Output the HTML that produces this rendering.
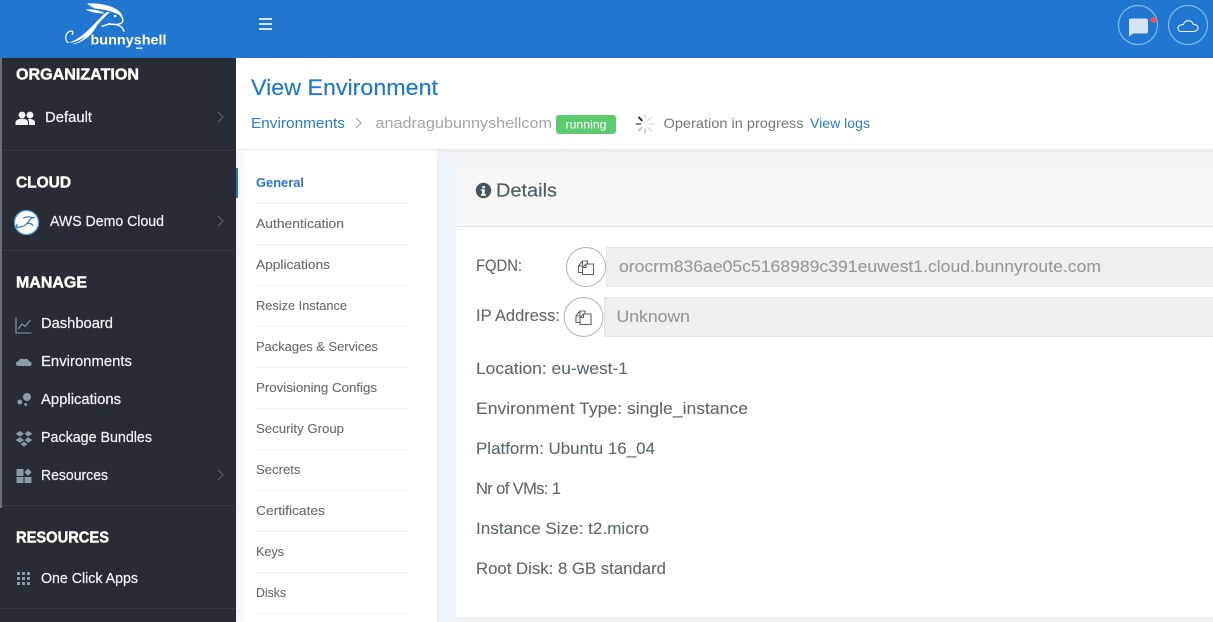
<!DOCTYPE html>
<html><head><meta charset="utf-8"><title>View Environment</title>
<style>
html,body{margin:0;padding:0;width:1213px;height:622px;overflow:hidden;background:#fff}
svg{display:block}
text{font-family:"Liberation Sans",sans-serif}
.h{font-size:16px;font-weight:bold;fill:#fff;stroke:#fff;stroke-width:.45px}
.m{font-size:15px;fill:#f2f3f4;stroke:#f2f3f4;stroke-width:.22px}
.n{font-size:13px;fill:#646c74;stroke:#646c74;stroke-width:.12px}
.d{font-size:16.500px;fill:#5c6870;stroke:#5c6870;stroke-width:.1px}
</style></head><body>
<svg width="1213" height="622" viewBox="0 0 1213 622" xmlns="http://www.w3.org/2000/svg">
<defs>
<linearGradient id="ns" x1="0" x2="1" y1="0" y2="0"><stop offset="0" stop-color="#f1f2f3"/><stop offset="1" stop-color="#fff"/></linearGradient>
<linearGradient id="hs" x1="0" x2="0" y1="0" y2="1"><stop offset="0" stop-color="#e6eaed"/><stop offset="1" stop-color="#eff4f8"/></linearGradient>
</defs>
<!-- backgrounds -->
<rect width="1213" height="622" fill="#edf3f7"/>
<rect x="236" y="58" width="977" height="92" fill="#fff"/>
<rect x="236" y="149" width="977" height="1" fill="#e9eced"/>
<rect x="437" y="150" width="776" height="3" fill="url(#hs)"/>
<rect x="236" y="150" width="201" height="472" fill="#fff"/>
<rect x="236" y="150" width="12" height="472" fill="url(#ns)"/>
<!-- header -->
<rect width="1213" height="58" fill="#2176d2"/>
<!-- logo -->
<g fill="#fff">
<path d="M87 3.500C97 3 108 4.500 115 8.500C119 10.500 121.500 13 122.500 16.500C116 12.500 106 9.500 95 8.500C92 7 89 5.500 87 3.500Z"/>
<path d="M85.500 9.500C92 9 100 10 105 13.500C98 13.500 91 12.500 85.500 9.500Z"/>
<path d="M110 12C103 18 97 26 90.500 32C83 38.500 75 43.500 68 42.500C72 42 78 39 85 33C93 26 100 17 107 12Z"/>
<path d="M97 25.500C94 31 91 35 86 38.500C81 42 76 44.500 72 44C78 43 82 40 85 36.500C90 32 93 28 97 25.500Z"/>
</g>
<g fill="none" stroke="#fff" stroke-linecap="round">
<path d="M113 11.500C120 13 124 18 122.500 22C120.500 25 113 25 108.500 23.500" stroke-width="1.400"/>
<path d="M102 26.500C110 22.500 122 23.500 124 31.500" stroke-width="1.300"/>
<path d="M68 42.500C64.500 40 65 32 71 31C73 31 73.500 33.500 72 34.500" stroke-width="1.200"/>
</g>
<circle cx="115" cy="16" r="1.300" fill="#fff"/>
<text x="90.500" y="44.500" font-size="14" font-weight="bold" fill="#fff" textLength="76" lengthAdjust="spacingAndGlyphs">bunnyshell</text>
<rect x="136" y="47.500" width="6.500" height="1.300" fill="#fff"/>
<g fill="#d4e4f6"><rect x="259" y="18" width="13" height="2"/><rect x="259" y="23" width="13" height="2"/><rect x="259" y="28" width="13" height="2"/></g>
<circle cx="1138" cy="25" r="19.500" fill="none" stroke="#7dbaf0" stroke-width="1.200"/>
<circle cx="1188" cy="25" r="19.500" fill="none" stroke="#7dbaf0" stroke-width="1.200"/>
<path d="M1130.500 18.500h15.500a2 2 0 0 1 2 2v11a2 2 0 0 1-2 2h-13l-4 3v-16a2 2 0 0 1 1.500-2z" fill="#d5e4f5"/>
<circle cx="1153.500" cy="20" r="3" fill="#f0544f"/>
<path d="M1181 31.500h12.500c2.500 0 4.500-1.500 4.500-3.600s-2-3.600-4.500-3.400c-1-2.500-3-4-5.500-3.800-2.300.2-4 1.700-4.500 3.900-3-.2-5.500 1.200-5.500 3.400s1.500 3.500 3 3.500z" fill="none" stroke="#e8f1fb" stroke-width="1.100"/>
<!-- sidebar -->
<rect y="58" width="236" height="564" fill="#282c34"/>
<g fill="#343840"><rect y="150" width="236" height="1"/><rect y="250" width="236" height="1"/><rect y="505" width="236" height="1"/><rect y="608" width="236" height="1"/></g>
<rect y="58" width="2" height="450" fill="#6c7075"/>
<text class="h" x="16" y="79.500" textLength="123" lengthAdjust="spacingAndGlyphs">ORGANIZATION</text>
<text class="h" x="16" y="187.500" textLength="55" lengthAdjust="spacingAndGlyphs">CLOUD</text>
<text class="h" x="16" y="287.500" textLength="71" lengthAdjust="spacingAndGlyphs">MANAGE</text>
<text class="h" x="16" y="542.500" textLength="93" lengthAdjust="spacingAndGlyphs">RESOURCES</text>
<text class="m" x="45" y="122" textLength="47" lengthAdjust="spacingAndGlyphs">Default</text>
<text class="m" x="50" y="226" textLength="114" lengthAdjust="spacingAndGlyphs">AWS Demo Cloud</text>
<text class="m" x="41" y="328" textLength="72" lengthAdjust="spacingAndGlyphs">Dashboard</text>
<text class="m" x="41" y="366" textLength="91" lengthAdjust="spacingAndGlyphs">Environments</text>
<text class="m" x="41" y="404" textLength="80" lengthAdjust="spacingAndGlyphs">Applications</text>
<text class="m" x="41" y="442" textLength="111" lengthAdjust="spacingAndGlyphs">Package Bundles</text>
<text class="m" x="41" y="480" textLength="67" lengthAdjust="spacingAndGlyphs">Resources</text>
<text class="m" x="41" y="583" textLength="97" lengthAdjust="spacingAndGlyphs">One Click Apps</text>
<!-- sidebar chevrons -->
<g fill="none" stroke="#566470" stroke-width="1.100"><path d="M218 112l5 5-5 5"/><path d="M218 216l5 5-5 5"/><path d="M218 470l5 5-5 5"/></g>
<!-- sidebar icons -->
<g fill="#f2f3f4"><circle cx="22" cy="115" r="3.400"/><circle cx="30" cy="115" r="3.400"/><path d="M15.500 125v-2.500c0-2.500 3-3.800 6.500-3.800s6 1.300 6 3.800v2.500z"/><path d="M29 125v-2.500c0-1.300-.4-2.500-1.200-3.500 3-.5 7.200.7 7.200 3.500v2.500z"/></g>
<circle cx="26.500" cy="222.500" r="12" fill="#fff" stroke="#5aa0da" stroke-width="1.300"/>
<path d="M18 227c5 1 9-3 11-6 2-3 4-4 6-3M23 218c3-1.500 7-1.500 9-.5M18 228c-2-.5-2-3-.5-3.500M26 224c3-1.500 6-.5 7 2" fill="none" stroke="#2f7cc8" stroke-width="1.200"/>
<path d="M16 317.500v15.500h15.500" fill="none" stroke="#8b9ca6" stroke-width="1.100"/>
<path d="M18 329l4-5 3 2.500 5.500-6.500" fill="none" stroke="#8b9ca6" stroke-width="1.100"/>
<path d="M18.500 366c-3.500 0-3.500-4.500-.2-4.700.8-2.500 3.500-3.600 5.700-1.900 1.800-1.100 4.500-.3 5 1.900 3.200-.1 3.700 4.700.6 4.700z" fill="#8b9ca6"/>
<g fill="#8b9ca6"><circle cx="27" cy="397" r="4"/><circle cx="19.800" cy="402" r="2.400"/><circle cx="25.700" cy="404.500" r="1.500"/></g>
<g fill="#8b9ca6"><path d="M20 431l-4.500 2.800 4.500 2.800 4-2.800z"/><path d="M28 431l-3.400 2.800 3.400 2.800 4.500-2.800z"/><path d="M20 437.200l-4.500 2.800 4.500 2.700 4-2.700z"/><path d="M28 437.200l-3.400 2.800 3.400 2.700 4.500-2.700z"/><path d="M20.500 444l3.500-2.500 3.500 2.500-3.500 2.700z"/></g>
<g fill="#8b9ca6"><rect x="16.500" y="469" width="7" height="7"/><rect x="16.500" y="477" width="7" height="6"/><rect x="24.500" y="477" width="7" height="6"/><path d="M28 468.500l3.700 3.700-3.700 3.500-3.600-3.500z"/></g>
<g fill="#8b9ca6">
<rect x="17" y="572" width="3" height="3"/><rect x="22" y="572" width="3" height="3"/><rect x="27" y="572" width="3" height="3"/>
<rect x="17" y="577" width="3" height="3"/><rect x="22" y="577" width="3" height="3"/><rect x="27" y="577" width="3" height="3"/>
<rect x="17" y="582" width="3" height="3"/><rect x="22" y="582" width="3" height="3"/><rect x="27" y="582" width="3" height="3"/>
</g>
<!-- page head -->
<text x="251" y="95" font-size="22.500" fill="#2176d2" stroke="#2176d2" stroke-width=".15" textLength="187" lengthAdjust="spacingAndGlyphs">View Environment</text>
<text x="251" y="128" font-size="14.500" fill="#2b7bd1" textLength="94" lengthAdjust="spacingAndGlyphs">Environments</text>
<path d="M356 118l5 5-5 5" fill="none" stroke="#9fa8ae" stroke-width="1.100"/>
<text x="375.500" y="128" font-size="14.500" fill="#9aa8b2" textLength="176.500" lengthAdjust="spacingAndGlyphs">anadragubunnyshellcom</text>
<rect x="556" y="115" width="60" height="19" rx="3" fill="#5ccb70"/>
<text x="565.500" y="128.500" font-size="12" fill="#fff" textLength="41" lengthAdjust="spacingAndGlyphs">running</text>
<g stroke-width="2" stroke-linecap="round">
<path d="M645 115v4" stroke="#e4e4e4"/><path d="M651 117.500l-2.800 2.800" stroke="#e4e4e4"/><path d="M654 124h-4" stroke="#e4e4e4"/><path d="M651 130.500l-2.800-2.800" stroke="#dedede"/><path d="M645 133v-4" stroke="#d6d6d6"/><path d="M639 130.500l2.800-2.800" stroke="#c8c8c8"/><path d="M636.500 124h4" stroke="#888"/><path d="M639 117.500l2.800 2.800" stroke="#333"/>
</g>
<text x="663.500" y="128" font-size="14" fill="#6f7a82" textLength="140" lengthAdjust="spacingAndGlyphs">Operation in progress</text>
<text x="810" y="128" font-size="14" fill="#2b7bd1" textLength="60" lengthAdjust="spacingAndGlyphs">View logs</text>
<!-- inner nav -->
<rect x="236" y="168" width="2" height="30" fill="#2176d2"/>
<text x="256" y="187" font-size="13" font-weight="bold" fill="#2f72d0" textLength="48" lengthAdjust="spacingAndGlyphs">General</text>
<text class="n" x="256" y="228" textLength="88" lengthAdjust="spacingAndGlyphs">Authentication</text>
<text class="n" x="256" y="269" textLength="74" lengthAdjust="spacingAndGlyphs">Applications</text>
<text class="n" x="256" y="310" textLength="91" lengthAdjust="spacingAndGlyphs">Resize Instance</text>
<text class="n" x="256" y="351" textLength="122" lengthAdjust="spacingAndGlyphs">Packages &amp; Services</text>
<text class="n" x="256" y="392" textLength="121" lengthAdjust="spacingAndGlyphs">Provisioning Configs</text>
<text class="n" x="256" y="433" textLength="88" lengthAdjust="spacingAndGlyphs">Security Group</text>
<text class="n" x="256" y="474" textLength="44.500" lengthAdjust="spacingAndGlyphs">Secrets</text>
<text class="n" x="256" y="515" textLength="69" lengthAdjust="spacingAndGlyphs">Certificates</text>
<text class="n" x="256" y="556" textLength="28" lengthAdjust="spacingAndGlyphs">Keys</text>
<text class="n" x="256" y="597" textLength="30" lengthAdjust="spacingAndGlyphs">Disks</text>
<g fill="#eff0f1"><rect x="256" y="203" width="152" height="1"/><rect x="256" y="244" width="152" height="1"/><rect x="256" y="285" width="152" height="1"/><rect x="256" y="326" width="152" height="1"/><rect x="256" y="367" width="152" height="1"/><rect x="256" y="408" width="152" height="1"/><rect x="256" y="449" width="152" height="1"/><rect x="256" y="490" width="152" height="1"/><rect x="256" y="531" width="152" height="1"/><rect x="256" y="572" width="152" height="1"/><rect x="256" y="613" width="152" height="1"/></g>
<!-- card -->
<rect x="456" y="168" width="770" height="449" rx="4" fill="#fff"/>
<path d="M456 226v-54a4 4 0 0 1 4-4h753v58z" fill="#f7f7f7"/>
<rect x="456" y="226" width="757" height="1" fill="#dfdfdf"/>
<circle cx="483.500" cy="190.500" r="7.700" fill="#46555f"/>
<rect x="482.300" y="186" width="2.500" height="2.300" fill="#f7f7f7"/>
<path d="M480.800 189.300h4v5h1.200v1.500h-5.200v-1.500h1.300v-3.500h-1.300z" fill="#f7f7f7"/>
<text x="496" y="196.500" font-size="18" fill="#4e5c64" stroke="#4e5c64" stroke-width=".15" textLength="61" lengthAdjust="spacingAndGlyphs">Details</text>
<text class="d" x="476" y="271" textLength="46" lengthAdjust="spacingAndGlyphs">FQDN:</text>
<text class="d" x="476" y="321" textLength="84" lengthAdjust="spacingAndGlyphs">IP Address:</text>
<!-- inputs -->
<rect x="606.500" y="247.500" width="620" height="39" fill="#edf0f3" stroke="#e2e4e6"/>
<rect x="604.500" y="297.500" width="620" height="39" fill="#edf0f3" stroke="#e2e4e6"/>
<text x="619" y="272" font-size="16.500" fill="#93999d" stroke="#93999d" stroke-width=".1" textLength="482" lengthAdjust="spacingAndGlyphs">orocrm836ae05c5168989c391euwest1.cloud.bunnyroute.com</text>
<text x="616.500" y="322" font-size="16.500" fill="#93999d" stroke="#93999d" stroke-width=".1" textLength="73.500" lengthAdjust="spacingAndGlyphs">Unknown</text>
<!-- copy buttons -->
<g fill="#fff" stroke="#b0b4b6" stroke-width="1"><circle cx="586" cy="267" r="19.500"/><circle cx="583.500" cy="317" r="19.500"/></g>
<g fill="none" stroke="#58646c" stroke-width="1.100">
<path d="M582 272.500h-3.500v-6.500l4-5h5v3"/><path d="M582.500 261v5h-4"/>
<path d="M582.500 274.500v-7l3.500-3.500h7.500v10.500z"/><path d="M586 264v3.500h-3.500"/>
</g>
<g fill="none" stroke="#58646c" stroke-width="1.100" transform="translate(-2.500 50)">
<path d="M582 272.500h-3.500v-6.500l4-5h5v3"/><path d="M582.500 261v5h-4"/>
<path d="M582.500 274.500v-7l3.500-3.500h7.500v10.500z"/><path d="M586 264v3.500h-3.500"/>
</g>
<!-- details -->
<text class="d" x="476" y="374" textLength="152" lengthAdjust="spacingAndGlyphs">Location: eu-west-1</text>
<text class="d" x="476" y="414" textLength="272" lengthAdjust="spacingAndGlyphs">Environment Type: single_instance</text>
<text class="d" x="476" y="454" textLength="179" lengthAdjust="spacingAndGlyphs">Platform: Ubuntu 16_04</text>
<text class="d" x="476" y="494" textLength="85">Nr of VMs: 1</text>
<text class="d" x="476" y="534" textLength="173" lengthAdjust="spacingAndGlyphs">Instance Size: t2.micro</text>
<text class="d" x="476" y="574" textLength="190" lengthAdjust="spacingAndGlyphs">Root Disk: 8 GB standard</text>
</svg>
</body></html>
